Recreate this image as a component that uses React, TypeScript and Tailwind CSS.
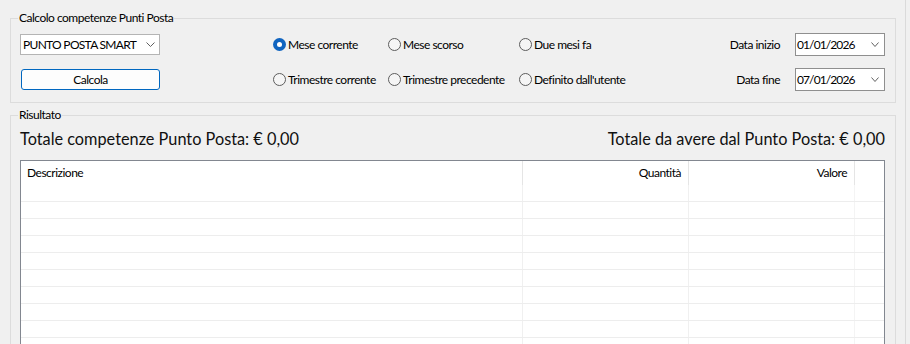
import React from "react";

function Chevron({ w = 9 }: { w?: number }) {
  return (
    <svg width={w} height={5} viewBox={`0 0 ${w} 5`} fill="none">
      <path d={`M0.5 0.5 L${w / 2} 4.5 L${w - 0.5} 0.5`} stroke="#606060" strokeWidth="1" />
    </svg>
  );
}

function Radio({ label, checked }: { label: string; checked?: boolean }) {
  return (
    <div className="flex items-center gap-[2px] self-center whitespace-nowrap">
      {checked ? (
        <span className="w-[13px] h-[13px] shrink-0 rounded-full bg-[#0f64c0] flex items-center justify-center">
          <span className="w-[5px] h-[5px] rounded-full bg-white" />
        </span>
      ) : (
        <span className="w-[13px] h-[13px] shrink-0 rounded-full border border-[#5d5d5d] bg-[#f5f5f5]" />
      )}
      <span className="leading-[16px]">{label}</span>
    </div>
  );
}

function DateBox({ value }: { value: string }) {
  return (
    <div className="h-[23px] w-[90px] border border-[#8f8f8f] bg-white flex items-center justify-between pl-[1px] pr-[5px]">
      <span className="leading-[16px] tracking-[-0.9px]">{value}</span>
      <Chevron w={8} />
    </div>
  );
}

export default function App() {
  const rows = Array.from({ length: 10 });
  return (
    <div className="w-[910px] h-[344px] overflow-hidden bg-[#f0f0f0] flex text-[12px] tracking-[-0.5px] text-black font-['Lato',sans-serif]">
      <div className="w-[905px] flex flex-col pl-[10px] pt-[10px]">
        <fieldset className="w-[886px] border border-[#dcdcdc] pl-[9px] pr-[10px] pt-[7px] pb-[11px]">
          <legend className="ml-[-2px] px-[1px] leading-[16px]">Calcolo competenze Punti Posta</legend>
          <div className="grid grid-cols-[140px_113px_115px_131px_1fr_auto_90px] grid-rows-[23px_23px] gap-y-[12px]">
            <div className="self-center h-[21px] w-[140px] border border-[#b4b4b4] bg-white flex items-center justify-between pl-[2px] pr-[4px]">
              <span className="leading-[16px] whitespace-nowrap tracking-[-0.7px]">PUNTO POSTA SMART</span>
              <Chevron />
            </div>
            <div />
            <Radio label="Mese corrente" checked />
            <Radio label="Mese scorso" />
            <Radio label="Due mesi fa" />
            <div className="self-center justify-self-end pr-[15px] leading-[16px] whitespace-nowrap">Data inizio</div>
            <DateBox value="01/01/2026" />

            <div className="self-center ml-[1px] h-[21px] w-[139px] border border-[#0067c0] rounded-[3px] bg-[#fdfdfd] flex items-center justify-center">
              <span className="leading-[16px]">Calcola</span>
            </div>
            <div />
            <Radio label="Trimestre corrente" />
            <Radio label="Trimestre precedente" />
            <Radio label="Definito dall'utente" />
            <div className="self-center justify-self-end pr-[15px] leading-[16px] whitespace-nowrap">Data fine</div>
            <DateBox value="07/01/2026" />
          </div>
        </fieldset>

        <fieldset className="mt-[4px] w-[886px] h-[300px] border border-[#dcdcdc] pl-[9px] pr-[10px] pt-[5px]">
          <legend className="ml-[-2px] px-[1px] leading-[16px]">Risultato</legend>
          <div className="flex justify-between text-[16.3px] tracking-normal leading-[21px] text-[#111] whitespace-nowrap">
            <span>Totale competenze Punto Posta: € 0,00</span>
            <span>Totale da avere dal Punto Posta: € 0,00</span>
          </div>
          <div className="mt-[11px] h-[220px] border border-[#828790] bg-white flex flex-col">
            <div className="flex h-[24px] shrink-0">
              <div className="w-[502px] border-r border-[#e5e5e5] flex items-center pl-[6px]">Descrizione</div>
              <div className="w-[166px] border-r border-[#e5e5e5] flex items-center justify-end pr-[7px]">Quantità</div>
              <div className="w-[166px] border-r border-[#e5e5e5] flex items-center justify-end pr-[7px]">Valore</div>
              <div className="flex-1" />
            </div>
            {rows.map((_, i) => (
              <div key={i} className="flex h-[17px] shrink-0 border-b border-[#ededed]">
                <div className="w-[502px] border-r border-[#f0f0f0]" />
                <div className="w-[166px] border-r border-[#f0f0f0]" />
                <div className="w-[166px] border-r border-[#f4f4f4]" />
                <div className="flex-1" />
              </div>
            ))}
          </div>
        </fieldset>
      </div>
      <div className="w-px h-full bg-[#dadada]" />
    </div>
  );
}
